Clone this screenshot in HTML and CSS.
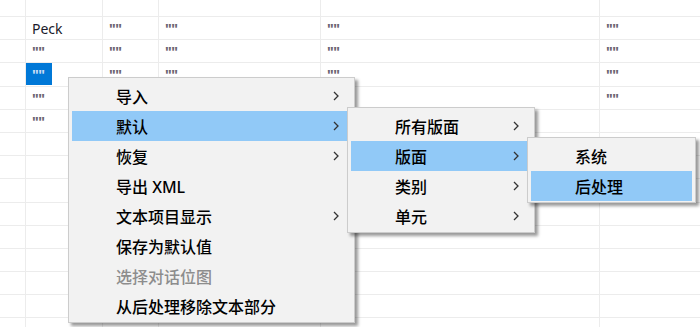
FILE: index.html
```html
<!DOCTYPE html>
<html lang="zh-CN">
<head>
<meta charset="utf-8">
<title>Menu</title>
<link rel="stylesheet" href="styles.css">
</head>
<body>
<div class="sheet">
  <div class="row head"><div class="c"></div><div class="c"></div><div class="c"></div><div class="c"></div><div class="c"></div><div class="c"></div></div>
  <div class="row"><div class="c"></div><div class="c">Peck</div><div class="c q">""</div><div class="c q">""</div><div class="c q">""</div><div class="c q">""</div></div>
  <div class="row"><div class="c"></div><div class="c q">""</div><div class="c q">""</div><div class="c q">""</div><div class="c q">""</div><div class="c q">""</div></div>
  <div class="row"><div class="c"></div><div class="c sel-cell"><span class="sel q">""</span></div><div class="c q">""</div><div class="c q">""</div><div class="c q">""</div><div class="c q">""</div></div>
  <div class="row"><div class="c"></div><div class="c q">""</div><div class="c"></div><div class="c"></div><div class="c"></div><div class="c q">""</div></div>
  <div class="row"><div class="c"></div><div class="c q">""</div><div class="c"></div><div class="c"></div><div class="c"></div><div class="c"></div></div>
  <div class="row"><div class="c"></div><div class="c"></div><div class="c"></div><div class="c"></div><div class="c"></div><div class="c"></div></div>
  <div class="row"><div class="c"></div><div class="c"></div><div class="c"></div><div class="c"></div><div class="c"></div><div class="c"></div></div>
  <div class="row"><div class="c"></div><div class="c"></div><div class="c"></div><div class="c"></div><div class="c"></div><div class="c"></div></div>
  <div class="row"><div class="c"></div><div class="c"></div><div class="c"></div><div class="c"></div><div class="c"></div><div class="c"></div></div>
  <div class="row"><div class="c"></div><div class="c"></div><div class="c"></div><div class="c"></div><div class="c"></div><div class="c"></div></div>
  <div class="row"><div class="c"></div><div class="c"></div><div class="c"></div><div class="c"></div><div class="c"></div><div class="c"></div></div>
  <div class="row"><div class="c"></div><div class="c"></div><div class="c"></div><div class="c"></div><div class="c"></div><div class="c"></div></div>
  <div class="row"><div class="c"></div><div class="c"></div><div class="c"></div><div class="c"></div><div class="c"></div><div class="c"></div></div>
  <div class="row"><div class="c"></div><div class="c"></div><div class="c"></div><div class="c"></div><div class="c"></div><div class="c"></div></div>
</div>

<div class="menu menu-main">
  <div class="item">导入<svg class="arrow" viewBox="0 0 6 10"><path d="M1 1 L5 5 L1 9"/></svg></div>
  <div class="item hot">默认<svg class="arrow" viewBox="0 0 6 10"><path d="M1 1 L5 5 L1 9"/></svg></div>
  <div class="item">恢复<svg class="arrow" viewBox="0 0 6 10"><path d="M1 1 L5 5 L1 9"/></svg></div>
  <div class="item">导出 XML</div>
  <div class="item">文本项目显示<svg class="arrow" viewBox="0 0 6 10"><path d="M1 1 L5 5 L1 9"/></svg></div>
  <div class="item">保存为默认值</div>
  <div class="item disabled">选择对话位图</div>
  <div class="item">从后处理移除文本部分</div>
</div>

<div class="menu menu-sub">
  <div class="item">所有版面<svg class="arrow" viewBox="0 0 6 10"><path d="M1 1 L5 5 L1 9"/></svg></div>
  <div class="item hot">版面<svg class="arrow" viewBox="0 0 6 10"><path d="M1 1 L5 5 L1 9"/></svg></div>
  <div class="item">类别<svg class="arrow" viewBox="0 0 6 10"><path d="M1 1 L5 5 L1 9"/></svg></div>
  <div class="item">单元<svg class="arrow" viewBox="0 0 6 10"><path d="M1 1 L5 5 L1 9"/></svg></div>
</div>

<div class="menu menu-sub2">
  <div class="item">系统</div>
  <div class="item hot">后处理</div>
</div>
</body>
</html>
```

FILE: styles.css
```css
html, body {
  margin: 0;
  padding: 0;
  background: #ffffff;
  overflow: hidden;
}

body {
  width: 700px;
  height: 327px;
  position: relative;
  font-family: "Noto Sans", "Noto Sans CJK SC", sans-serif;
}

.sheet {
  display: flex;
  flex-direction: column;
}

.row {
  display: grid;
  grid-template-columns: 26px 77px 56px 162px 279px 120px;
  height: 23.2px;
}

.row.head {
  height: 17px;
}

.c {
  box-sizing: border-box;
  border-right: 1px solid #ececec;
  border-bottom: 1px solid #ececec;
  padding: 1px 0 0 6px;
  font-size: 14px;
  line-height: 21px;
  color: #1a1a2a;
  white-space: nowrap;
  overflow: hidden;
}

.q {
  color: #6b6470;
  font-weight: 700;
  letter-spacing: -0.5px;
}

.c.sel-cell {
  padding: 0;
}

.sel {
  display: inline-block;
  width: 26px;
  height: 22px;
  box-sizing: border-box;
  padding: 1px 0 0 6px;
  background: #0078d7;
  color: #c8dcf4;
}

.menu {
  position: absolute;
  box-sizing: border-box;
  background: #f2f2f2;
  border: 1px solid #cccccc;
  padding: 3px 3px 1px 3px;
  box-shadow: 3px 3px 3px rgba(0, 0, 0, 0.4);
  font-family: "Noto Sans", "Noto Sans CJK SC", sans-serif;
  font-size: 16px;
  font-weight: 500;
  color: #000;
}

.menu-main {
  left: 68px;
  top: 77px;
  width: 287px;
  z-index: 1;
}

.menu-sub {
  left: 347px;
  top: 107px;
  width: 188px;
  z-index: 2;
}

.menu-sub2 {
  left: 527px;
  top: 137px;
  width: 169px;
  z-index: 3;
}

.item {
  position: relative;
  height: 30px;
  display: flex;
  align-items: center;
  padding-left: 44px;
  white-space: nowrap;
}

.item.hot {
  background: #91c9f7;
}

.item.disabled {
  color: #8d8d8d;
}

.arrow {
  position: absolute;
  right: 12px;
  top: 10px;
  width: 6px;
  height: 10px;
  fill: none;
  stroke: #333333;
  stroke-width: 1.3;
}
```
